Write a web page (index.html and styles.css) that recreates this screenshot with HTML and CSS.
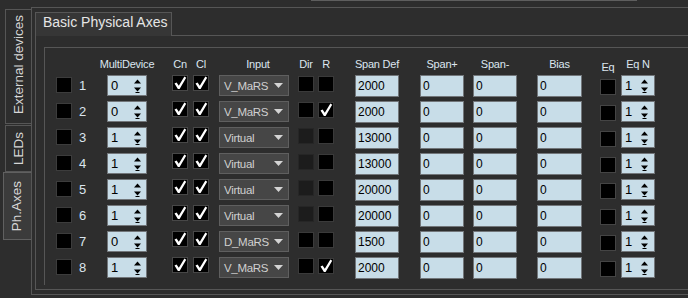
FILE: index.html
```html
<!DOCTYPE html>
<html lang="en">
<head>
  <meta charset="UTF-8">
  <title>Basic Physical Axes</title>
  <link rel="stylesheet" href="styles.css">
</head>
<body>
  <svg class="defs" width="0" height="0">
    <symbol id="tick" viewBox="0 0 16 16"><path d="M2.5 8.5 L4.6 7.4 L6.8 10.8 L12.4 1.6 L14.2 2.8 L7.6 14 L5.9 14 Z" fill="#fff"/></symbol>
    <symbol id="arr" viewBox="0 0 7 14"><path d="M0 4.6 L3.5 0.6 L7 4.6 Z M0 8.6 L7 8.6 L3.5 12.4 Z" fill="#000"/><rect x="1.5" y="13" width="4" height="1" fill="#000"/></symbol>
    <symbol id="dd" viewBox="0 0 9 5"><path d="M0 0 L9 0 L4.5 5 Z" fill="#d4d4d4"/></symbol>
  </svg>

  <div class="topline"></div>

  <div class="window">
    <div class="sidetabs">
      <div class="vtab ext"><span>External devices</span></div>
      <div class="vtab leds"><span>LEDs</span></div>
      <div class="vtab axes"><span>Ph.Axes</span></div>
    </div>

    <div class="frame">
      <div class="tab">Basic Physical Axes</div>
      <div class="page">
        <div class="group">
          <div class="grid">
            <!-- header -->
            <span class="hd w16"></span>
            <span class="hd"></span>
            <span class="hd w40">MultiDevice</span>
            <span class="hd w16">Cn</span>
            <span class="hd w16">Cl</span>
            <span class="hd w70 nudge">Input</span>
            <span class="hd w16">Dir</span>
            <span class="hd w16">R</span>
            <span class="hd w44">Span Def</span>
            <span class="hd w44">Span+</span>
            <span class="hd w44">Span-</span>
            <span class="hd w45">Bias</span>
            <span class="hd w16 low">Eq</span>
            <span class="hd w34">Eq N</span>

            <!-- row 1 -->
            <span class="sq"></span><span class="num">1</span>
            <span class="spin"><span>0</span><svg class="arr"><use href="#arr"/></svg></span>
            <span class="cb"><svg><use href="#tick"/></svg></span>
            <span class="cb"><svg><use href="#tick"/></svg></span>
            <span class="dd"><span>V_MaRS</span><svg class="dda"><use href="#dd"/></svg></span>
            <span class="cb dr"></span>
            <span class="cb dr"></span>
            <span class="tb">2000</span><span class="tb">0</span><span class="tb">0</span><span class="tb bias">0</span>
            <span class="sq eq"></span>
            <span class="spin eqn"><span>1</span><svg class="arr"><use href="#arr"/></svg></span>

            <!-- row 2 -->
            <span class="sq"></span><span class="num">2</span>
            <span class="spin"><span>0</span><svg class="arr"><use href="#arr"/></svg></span>
            <span class="cb"><svg><use href="#tick"/></svg></span>
            <span class="cb"><svg><use href="#tick"/></svg></span>
            <span class="dd"><span>V_MaRS</span><svg class="dda"><use href="#dd"/></svg></span>
            <span class="cb dr"></span>
            <span class="cb dr"><svg><use href="#tick"/></svg></span>
            <span class="tb">2000</span><span class="tb">0</span><span class="tb">0</span><span class="tb bias">0</span>
            <span class="sq eq"></span>
            <span class="spin eqn"><span>1</span><svg class="arr"><use href="#arr"/></svg></span>

            <!-- row 3 -->
            <span class="sq"></span><span class="num">3</span>
            <span class="spin"><span>1</span><svg class="arr"><use href="#arr"/></svg></span>
            <span class="cb"><svg><use href="#tick"/></svg></span>
            <span class="cb"><svg><use href="#tick"/></svg></span>
            <span class="dd"><span>Virtual</span><svg class="dda"><use href="#dd"/></svg></span>
            <span class="cb dr off"></span>
            <span class="cb dr"></span>
            <span class="tb">13000</span><span class="tb">0</span><span class="tb">0</span><span class="tb bias">0</span>
            <span class="sq eq"></span>
            <span class="spin eqn"><span>1</span><svg class="arr"><use href="#arr"/></svg></span>

            <!-- row 4 -->
            <span class="sq"></span><span class="num">4</span>
            <span class="spin"><span>1</span><svg class="arr"><use href="#arr"/></svg></span>
            <span class="cb"><svg><use href="#tick"/></svg></span>
            <span class="cb"><svg><use href="#tick"/></svg></span>
            <span class="dd"><span>Virtual</span><svg class="dda"><use href="#dd"/></svg></span>
            <span class="cb dr off"></span>
            <span class="cb dr"></span>
            <span class="tb">13000</span><span class="tb">0</span><span class="tb">0</span><span class="tb bias">0</span>
            <span class="sq eq"></span>
            <span class="spin eqn"><span>1</span><svg class="arr"><use href="#arr"/></svg></span>

            <!-- row 5 -->
            <span class="sq"></span><span class="num">5</span>
            <span class="spin"><span>1</span><svg class="arr"><use href="#arr"/></svg></span>
            <span class="cb"><svg><use href="#tick"/></svg></span>
            <span class="cb"><svg><use href="#tick"/></svg></span>
            <span class="dd"><span>Virtual</span><svg class="dda"><use href="#dd"/></svg></span>
            <span class="cb dr off"></span>
            <span class="cb dr"></span>
            <span class="tb">20000</span><span class="tb">0</span><span class="tb">0</span><span class="tb bias">0</span>
            <span class="sq eq"></span>
            <span class="spin eqn"><span>1</span><svg class="arr"><use href="#arr"/></svg></span>

            <!-- row 6 -->
            <span class="sq"></span><span class="num">6</span>
            <span class="spin"><span>1</span><svg class="arr"><use href="#arr"/></svg></span>
            <span class="cb"><svg><use href="#tick"/></svg></span>
            <span class="cb"><svg><use href="#tick"/></svg></span>
            <span class="dd"><span>Virtual</span><svg class="dda"><use href="#dd"/></svg></span>
            <span class="cb dr off"></span>
            <span class="cb dr"></span>
            <span class="tb">20000</span><span class="tb">0</span><span class="tb">0</span><span class="tb bias">0</span>
            <span class="sq eq"></span>
            <span class="spin eqn"><span>1</span><svg class="arr"><use href="#arr"/></svg></span>

            <!-- row 7 -->
            <span class="sq"></span><span class="num">7</span>
            <span class="spin"><span>0</span><svg class="arr"><use href="#arr"/></svg></span>
            <span class="cb"><svg><use href="#tick"/></svg></span>
            <span class="cb"><svg><use href="#tick"/></svg></span>
            <span class="dd"><span>D_MaRS</span><svg class="dda"><use href="#dd"/></svg></span>
            <span class="cb dr"></span>
            <span class="cb dr"></span>
            <span class="tb">1500</span><span class="tb">0</span><span class="tb">0</span><span class="tb bias">0</span>
            <span class="sq eq"></span>
            <span class="spin eqn"><span>1</span><svg class="arr"><use href="#arr"/></svg></span>

            <!-- row 8 -->
            <span class="sq"></span><span class="num">8</span>
            <span class="spin"><span>1</span><svg class="arr"><use href="#arr"/></svg></span>
            <span class="cb"><svg><use href="#tick"/></svg></span>
            <span class="cb"><svg><use href="#tick"/></svg></span>
            <span class="dd"><span>V_MaRS</span><svg class="dda"><use href="#dd"/></svg></span>
            <span class="cb dr"></span>
            <span class="cb dr"><svg><use href="#tick"/></svg></span>
            <span class="tb">2000</span><span class="tb">0</span><span class="tb">0</span><span class="tb bias">0</span>
            <span class="sq eq"></span>
            <span class="spin eqn"><span>1</span><svg class="arr"><use href="#arr"/></svg></span>
          </div>
        </div>
      </div>
    </div>
  </div>
</body>
</html>
```

FILE: styles.css
```css
body {
  margin: 0;
  width: 688px;
  height: 298px;
  overflow: hidden;
  background-color: #2d2d2d;
  font-family: "Liberation Sans", Arial, sans-serif;
}
.defs {
  display: block;
  width: 0;
  height: 0;
}
.topline {
  margin-left: 311px;
  width: 326px;
  height: 1px;
  background-color: #5e5e5e;
}
.window {
  display: flex;
}

/* left vertical tabs */
.sidetabs {
  flex: none;
  width: 31px;
  padding-top: 8px;
  display: flex;
  flex-direction: column;
  align-items: flex-end;
}
.vtab {
  box-sizing: border-box;
  border: 1px solid #565656;
  border-right: none;
  display: flex;
  align-items: center;
  justify-content: center;
  color: #d6d6d6;
  font-size: 13.5px;
}
.vtab span {
  writing-mode: vertical-rl;
  transform: rotate(180deg);
}
.vtab.ext {
  width: 26px;
  height: 115px;
  padding-bottom: 4px;
}
.vtab.leds {
  width: 26px;
  height: 47px;
  margin-top: 1px;
}
.vtab.axes {
  width: 28px;
  height: 68px;
  background-color: #3b3b3b;
  border-color: #606060;
  padding-right: 2px;
}

/* outer frame and tab page */
.frame {
  flex: 1;
  margin-top: 6px;
  height: 288px;
  box-sizing: border-box;
  border: 1px solid #565656;
  border-right: none;
  padding: 4px 0 0 3px;
}
.tab {
  position: relative;
  width: 137px;
  height: 24px;
  margin-bottom: -1px;
  box-sizing: border-box;
  border: 1px solid #565656;
  border-bottom: none;
  background-color: #363636;
  color: #e6e6e6;
  font-size: 14px;
  line-height: 19px;
  padding-left: 7px;
}
.page {
  height: 255px;
  box-sizing: border-box;
  border: 1px solid #565656;
  border-right: none;
  padding: 11px 0 0 8px;
}
.group {
  height: 238px;
  box-sizing: border-box;
  border-top: 1px solid #565656;
  border-left: 1px solid #565656;
}

/* axes table */
.grid {
  display: grid;
  grid-template-columns: 23px 28px 65px 21px 26px 79px 20px 37px 65px 53px 64px 63px 21px 34px;
  grid-template-rows: 27px;
  grid-auto-rows: 26px;
  padding-left: 11px;
}
.grid > * {
  align-self: start;
  box-sizing: border-box;
}
.hd {
  display: flex;
  justify-content: center;
  padding-top: 10px;
  font-size: 11px;
  line-height: 13px;
  letter-spacing: -0.2px;
  color: #dce6f0;
  white-space: nowrap;
}
.hd.low {
  padding-top: 13px;
}
.hd.nudge {
  padding-left: 8px;
}
.w16 { width: 16px; }
.w34 { width: 34px; }
.w40 { width: 40px; }
.w44 { width: 44px; }
.w45 { width: 45px; }
.w70 { width: 70px; }

.sq {
  width: 16px;
  height: 16px;
  margin-top: 2px;
  background-color: #000;
  border: 1px solid #3c3c3c;
}
.sq.eq {
  margin-top: 4px;
  border-color: #444;
}
.num {
  font-size: 13px;
  line-height: 21px;
  color: #dbe5ee;
}
.spin {
  width: 40px;
  height: 21px;
  display: flex;
  align-items: center;
  justify-content: space-between;
  padding: 0 5px 0 3px;
  background-color: #c8dde8;
  border: 1px solid #72767a;
  font-size: 13px;
  color: #000;
}
.spin.eqn {
  width: 34px;
  padding-right: 6px;
}
.arr {
  width: 7px;
  height: 14px;
}
.cb {
  width: 16px;
  height: 16px;
  background-color: #000;
  border: 1px solid #474747;
}
.cb svg {
  display: block;
  width: 16px;
  height: 16px;
  margin: -1px 0 0 -1px;
}
.cb.dr {
  margin-top: 1px;
  border-color: #3a3a3a;
}
.cb.off {
  background-color: #1c1c1c;
  border-color: #262626;
}
.dd {
  width: 70px;
  height: 21px;
  display: flex;
  align-items: center;
  justify-content: space-between;
  padding: 0 5px 0 4px;
  background-color: #464646;
  border: 1px solid #5f5f5f;
  color: #d0d0d0;
  font-size: 11.5px;
  letter-spacing: -0.3px;
}
.dda {
  width: 9px;
  height: 5px;
}
.tb {
  width: 44px;
  height: 22px;
  padding-left: 2px;
  background-color: #c8dde8;
  border: 1px solid #72767a;
  font-size: 12px;
  line-height: 20px;
  color: #000;
}
.tb.bias {
  width: 45px;
}
```
